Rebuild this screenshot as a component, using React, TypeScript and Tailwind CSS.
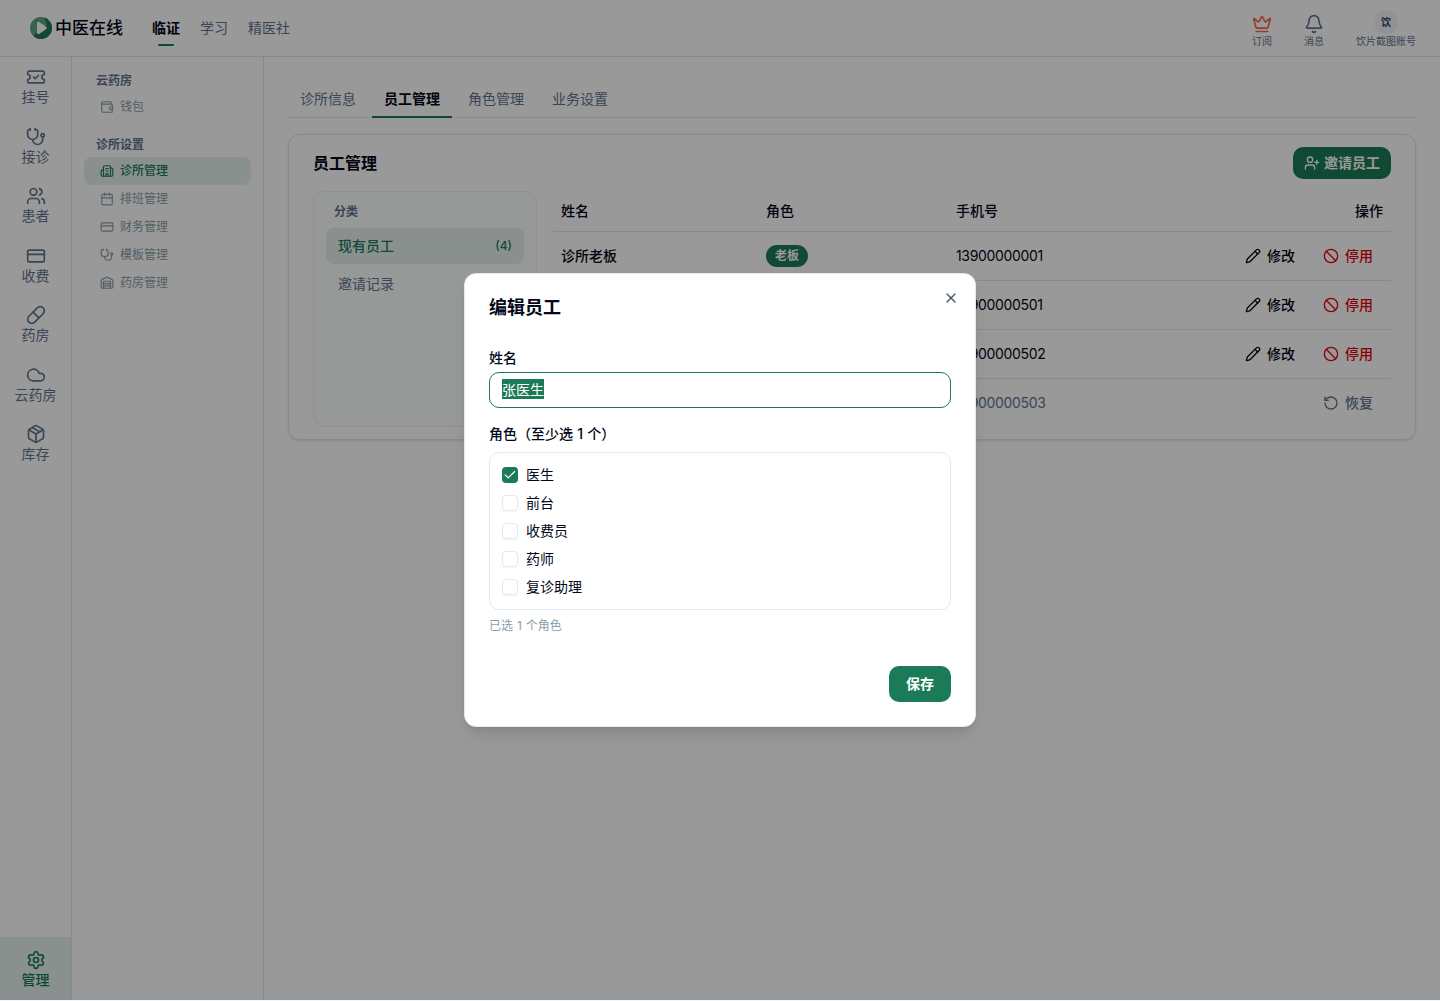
import { useEffect, useRef } from 'react';
import type { ReactNode } from 'react';
import {
  Ban,
  Bell,
  Building2,
  Calendar,
  Check,
  Cloud,
  CreditCard,
  Crown,
  Package,
  Pencil,
  Pill,
  RotateCcw,
  Settings,
  Stethoscope,
  TicketCheck,
  UserPlus,
  Users,
  Wallet,
  Warehouse,
  X,
} from 'lucide-react';
import type { LucideIcon } from 'lucide-react';

const railItems: { label: string; icon: LucideIcon }[] = [
  { label: '挂号', icon: TicketCheck },
  { label: '接诊', icon: Stethoscope },
  { label: '患者', icon: Users },
  { label: '收费', icon: CreditCard },
  { label: '药房', icon: Pill },
  { label: '云药房', icon: Cloud },
  { label: '库存', icon: Package },
];

const settingsItems: { label: string; icon: LucideIcon; active?: boolean }[] = [
  { label: '诊所管理', icon: Building2, active: true },
  { label: '排班管理', icon: Calendar },
  { label: '财务管理', icon: CreditCard },
  { label: '模板管理', icon: Stethoscope },
  { label: '药房管理', icon: Warehouse },
];

const staff = [
  { name: '诊所老板', role: '老板', phone: '13900000001', disabled: false },
  { name: '张医生', role: '医生', phone: '13900000501', disabled: false },
  { name: '李前台', role: '前台', phone: '13900000502', disabled: false },
  { name: '王药师', role: '药师', phone: '13900000503', disabled: true },
];

const roles = [
  { label: '医生', checked: true },
  { label: '前台', checked: false },
  { label: '收费员', checked: false },
  { label: '药师', checked: false },
  { label: '复诊助理', checked: false },
];

function Logo() {
  return (
    <svg viewBox="0 0 22 22" className="size-[22px]">
      <circle cx="11" cy="11" r="11" fill="#5fa37c" />
      <path d="M14.500 .57A11 11 0 1 1 3.220 18.780L7 16L17 8Z" fill="#1b7a57" />
      <path d="M7 6.200c0-1.200 1.100-1.800 2.100-1.200l7 4.800c.9.600.9 1.800 0 2.400l-7 4.800c-1 .6-2.100 0-2.100-1.200Z" fill="#fff" />
    </svg>
  );
}

function Header() {
  return (
    <header className="flex h-[57px] shrink-0 items-center border-b border-slate-200 pr-6 pl-[30px]">
      <Logo />
      <span className="ml-[3px] text-[17px] leading-6 font-medium">中医在线</span>
      <nav className="ml-[29px] flex gap-5 text-sm text-slate-500">
        <span className="relative font-bold text-[#020817]">
          临证
          <span className="absolute -bottom-2 left-1.5 h-0.5 w-4 rounded-full bg-[#1b7a57]" />
        </span>
        <span>学习</span>
        <span>精医社</span>
      </nav>
      <div className="ml-auto flex items-start gap-8 text-[10px] leading-3 text-slate-500">
        <div className="flex flex-col items-center pt-[5px]">
          <Crown className="size-5 text-[#f4694c]" strokeWidth={2} />
          <span className="mt-px">订阅</span>
        </div>
        <div className="flex flex-col items-center pt-[5px]">
          <Bell className="size-5" strokeWidth={2} />
          <span className="mt-px">消息</span>
        </div>
        <div className="flex flex-col items-center pt-px">
          <span className="flex size-6 items-center justify-center rounded-full bg-slate-100 font-bold text-slate-700">饮</span>
          <span className="mt-px">饮片截图账号</span>
        </div>
      </div>
    </header>
  );
}

function Rail() {
  return (
    <aside className="flex w-[72px] shrink-0 flex-col border-r border-slate-200 text-sm leading-[19.5px] text-slate-500">
      <div className="flex flex-col pt-[10px]">
        {railItems.map(({ label, icon: Icon }) => (
          <div key={label} className="flex h-[59.5px] flex-col items-center">
            <Icon className="size-5" strokeWidth={2} />
            <span>{label}</span>
          </div>
        ))}
      </div>
      <div className="mt-auto flex h-[63px] flex-col items-center bg-[#e6f1ec] pt-[13px] font-medium text-[#1b7a57]">
        <Settings className="size-5" strokeWidth={2} />
        <span>管理</span>
      </div>
    </aside>
  );
}

function SideRow({ label, icon: Icon, active }: { label: string; icon: LucideIcon; active?: boolean }) {
  return (
    <div
      className={
        active
          ? 'flex h-7 items-center gap-1.5 rounded-lg bg-[#e6f1ec] px-4 font-medium text-[#1b7a57]'
          : 'flex h-7 items-center gap-1.5 px-4 text-[#8a9ea8]'
      }
    >
      <Icon className="size-3.5" strokeWidth={2} />
      {label}
    </div>
  );
}

function SideMenu() {
  return (
    <aside className="w-48 shrink-0 border-r border-slate-200 px-3 pt-4 text-xs">
      <h3 className="px-3 pb-1 font-semibold text-slate-500">云药房</h3>
      <SideRow label="钱包" icon={Wallet} />
      <h3 className="mt-4 px-3 pb-1 font-semibold text-slate-500">诊所设置</h3>
      {settingsItems.map((item) => (
        <SideRow key={item.label} {...item} />
      ))}
    </aside>
  );
}

function Tabs() {
  return (
    <div className="flex h-[37px] gap-1 border-b border-slate-200 text-sm text-slate-500">
      <span className="px-3 pt-2">诊所信息</span>
      <span className="h-[37px] border-b-2 border-[#1b7a57] px-3 pt-2 font-semibold text-[#020817]">员工管理</span>
      <span className="px-3 pt-2">角色管理</span>
      <span className="px-3 pt-2">业务设置</span>
    </div>
  );
}

function Action({ icon: Icon, children, tone }: { icon: LucideIcon; children: ReactNode; tone: string }) {
  return (
    <span className={'flex h-8 items-center gap-1.5 px-2.5 font-medium ' + tone}>
      <Icon className="size-4" strokeWidth={2} />
      {children}
    </span>
  );
}

function StaffTable() {
  return (
    <table className="h-[236px] w-[838px] table-fixed border-collapse text-left text-sm">
      <colgroup>
        <col className="w-[205px]" />
        <col className="w-[190px]" />
        <col className="w-[190px]" />
        <col />
      </colgroup>
      <thead>
        <tr className="h-10 border-b border-slate-200">
          <th className="px-2 font-medium">姓名</th>
          <th className="px-2 font-medium">角色</th>
          <th className="px-2 font-medium">手机号</th>
          <th className="px-2 text-right font-medium">操作</th>
        </tr>
      </thead>
      <tbody>
        {staff.map((s) => (
          <tr
            key={s.phone}
            className={s.disabled ? 'h-[49px] text-slate-500' : 'h-[49px] border-b border-slate-200'}
          >
            <td className="px-2 font-medium">{s.name}</td>
            <td className="px-2">
              <span className="inline-flex h-[22px] items-center rounded-full bg-[#1b7a57] px-[9px] align-middle text-xs font-bold text-white">
                {s.role}
              </span>
            </td>
            <td className="px-2 tracking-[-0.33px]">{s.phone}</td>
            <td className="px-2">
              <div className="flex justify-end gap-2">
                {s.disabled ? (
                  <Action icon={RotateCcw} tone="text-slate-500">恢复</Action>
                ) : (
                  <>
                    <Action icon={Pencil} tone="text-[#020817]">修改</Action>
                    <Action icon={Ban} tone="text-[#e7000b]">停用</Action>
                  </>
                )}
              </div>
            </td>
          </tr>
        ))}
      </tbody>
    </table>
  );
}

function StaffCard() {
  return (
    <section className="mt-4 h-[306px] rounded-xl border border-slate-200 bg-white px-6 pt-3 shadow-sm">
      <div className="flex items-center justify-between">
        <h2 className="text-base font-bold">员工管理</h2>
        <button className="flex h-8 items-center gap-1 rounded-[10px] bg-[#1b7a57] px-[11px] text-sm font-bold text-white">
          <UserPlus className="size-4" strokeWidth={2} />
          邀请员工
        </button>
      </div>
      <div className="mt-3 flex gap-4">
        <div className="h-[236px] w-56 shrink-0 rounded-xl border border-[#eceff1] bg-[#fcfefd] px-3 pt-3">
          <div className="px-2 pb-2 text-xs font-semibold text-slate-500">分类</div>
          <div className="flex h-9 items-center justify-between rounded-lg bg-[#e6f1ec] px-3 text-sm font-medium text-[#1b7a57]">
            现有员工
            <span className="text-xs">(4)</span>
          </div>
          <div className="mt-0.5 flex h-9 items-center px-3 text-sm text-slate-500">邀请记录</div>
        </div>
        <StaffTable />
      </div>
    </section>
  );
}

function EditDialog() {
  const ref = useRef<HTMLInputElement>(null);
  useEffect(() => {
    ref.current?.focus();
    ref.current?.select();
  }, []);
  return (
    <div className="relative h-[454px] w-[512px] rounded-xl border border-slate-200 bg-white px-6 pt-5 shadow-lg">
      <X className="absolute top-4 right-4 size-4 text-slate-600" strokeWidth={2} />
      <h2 className="text-lg leading-7 font-bold">编辑员工</h2>
      <div className="mt-[26px] text-sm font-medium">姓名</div>
      <input
        ref={ref}
        defaultValue="张医生"
        className="mt-1 block h-9 w-full rounded-[10px] border border-[#1b7a57] px-3 pb-0.5 text-sm caret-transparent outline-none selection:bg-[#1b7a57] selection:text-white"
      />
      <div className="mt-4 text-sm font-medium">
        角色（至少选<span className="px-[0.5px]"> 1 </span>个）
      </div>
      <div className="mt-2 flex h-[158px] flex-col gap-2 rounded-[10px] border border-slate-200 px-3 pt-3 text-sm">
        {roles.map((r) => (
          <label key={r.label} className="flex h-5 items-center gap-2">
            {r.checked ? (
              <span className="flex size-4 items-center justify-center rounded-[4px] bg-[#1b7a57] text-white">
                <Check className="size-3.5" strokeWidth={2} />
              </span>
            ) : (
              <span className="size-4 rounded-[4px] border border-slate-200 shadow-xs" />
            )}
            {r.label}
          </label>
        ))}
      </div>
      <div className="mt-2 text-xs text-[#8a9ea8]">
        已选<span className="px-[0.5px]"> 1 </span>个角色
      </div>
      <div className="mt-8 flex justify-end">
        <button className="h-9 w-[62px] rounded-[10px] bg-[#1b7a57] text-sm font-bold text-white">保存</button>
      </div>
    </div>
  );
}

export default function App() {
  return (
    <div className="relative h-[1001px] w-[1440px] overflow-hidden bg-[#f5f8fb] font-['Inter','Noto_Sans_CJK_SC',sans-serif] text-[#020817]">
      <div className="flex h-[1000px] flex-col bg-white">
        <Header />
        <div className="flex min-h-0 flex-1">
          <Rail />
          <SideMenu />
          <main className="min-w-0 flex-1 px-6 pt-6">
            <Tabs />
            <StaffCard />
          </main>
        </div>
      </div>
      <div className="absolute inset-x-0 top-0 flex h-[1000px] items-center justify-center bg-black/40">
        <EditDialog />
      </div>
    </div>
  );
}
